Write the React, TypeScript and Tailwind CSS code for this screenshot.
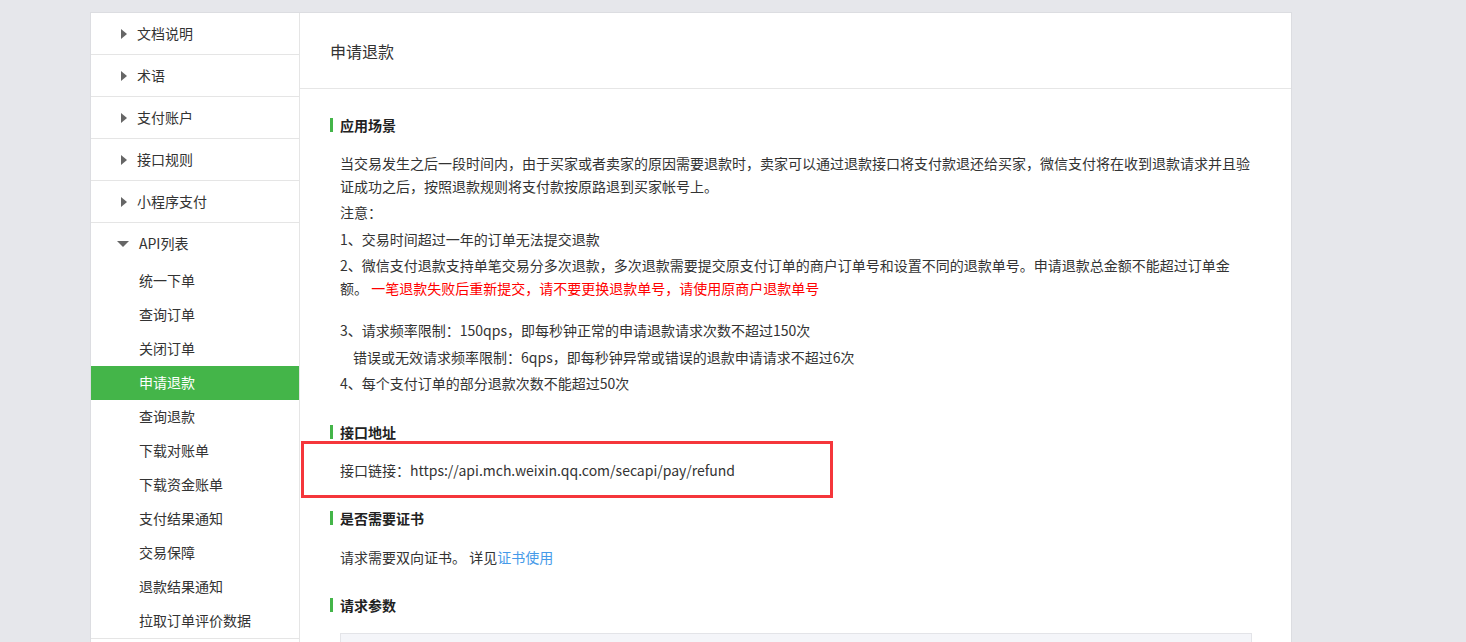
import React from 'react';

const topItems = ['文档说明', '术语', '支付账户', '接口规则', '小程序支付'];

const apiItems = [
  '统一下单',
  '查询订单',
  '关闭订单',
  '申请退款',
  '查询退款',
  '下载对账单',
  '下载资金账单',
  '支付结果通知',
  '交易保障',
  '退款结果通知',
  '拉取订单评价数据',
];

const font = { fontFamily: '"Noto Sans CJK SC", "Noto Sans", sans-serif' };

const RightCaret = () => (
  <span className="inline-block w-0 h-0 border-y-[5px] border-y-transparent border-l-[6px] border-l-[#666]" />
);

const DownCaret = () => (
  <span className="inline-block w-0 h-0 border-x-[6px] border-x-transparent border-t-[6px] border-t-[#666]" />
);

const Sidebar = () => (
  <div className="w-[209px] shrink-0 border-r border-[#e5e5e5] text-[14px] text-[#333]">
    {topItems.map((name) => (
      <div key={name} className="flex h-[42px] items-center gap-x-[10px] border-b border-[#e5e5e5] pl-[30px]">
        <RightCaret />
        <span>{name}</span>
      </div>
    ))}
    <div className="border-b border-[#e5e5e5]">
      <div className="flex h-[41px] items-center gap-x-[10px] pl-[26px]">
        <DownCaret />
        <span>API列表</span>
      </div>
      <ul>
        {apiItems.map((name) => (
          <li
            key={name}
            className={
              name === '申请退款'
                ? 'flex h-[34px] items-center bg-[#44b549] pb-[1px] pl-[48px] text-white'
                : 'flex h-[34px] items-center pb-[1px] pl-[48px]'
            }
          >
            {name}
          </li>
        ))}
      </ul>
    </div>
    <div className="flex h-[42px] items-center gap-x-[10px] border-b border-[#e5e5e5] pl-[30px]">
      <RightCaret />
      <span>常见问题</span>
    </div>
  </div>
);

const SectionTitle = ({ children }: { children: React.ReactNode }) => (
  <h3 className="h-[14px] border-l-[3px] border-[#44b549] pl-[7px] text-[14px] font-bold leading-[14px] text-[#222]">
    {children}
  </h3>
);

export default function App() {
  return (
    <div className="min-h-[642px] bg-[#e6e7eb] pt-[12px]" style={font}>
      <div className="ml-[90px] flex w-[1202px] border border-[#dcdde1] bg-white">
        <Sidebar />
        <div className="flex-1">
          <div className="h-[76px] border-b border-[#e6e6e6] pl-[30px] pt-[26px] text-[16px] leading-[24px] text-[#333]">
            申请退款
          </div>
          <div className="pl-[30px] pr-[39px] pt-[29px] text-[14px] text-[#333]">
            <section>
              <SectionTitle>应用场景</SectionTitle>
              <div className="mt-[20px] pl-[10px] leading-[22.5px]">
                <p className="mb-[4px]">
                  当交易发生之后一段时间内，由于买家或者卖家的原因需要退款时，卖家可以通过退款接口将支付款退还给买家，微信支付将在收到退款请求并且验证成功之后，按照退款规则将支付款按原路退到买家帐号上。
                </p>
                <p className="mb-[4px]">注意：</p>
                <p className="mb-[4px]">1、交易时间超过一年的订单无法提交退款</p>
                <p className="mb-[20px]">
                  2、微信支付退款支持单笔交易分多次退款，多次退款需要提交原支付订单的商户订单号和设置不同的退款单号。申请退款总金额不能超过订单金额。{' '}
                  <span className="text-[#ff0000]">一笔退款失败后重新提交，请不要更换退款单号，请使用原商户退款单号</span>
                </p>
                <p className="mb-[4px]">3、请求频率限制：150qps，即每秒钟正常的申请退款请求次数不超过150次</p>
                <p className="mb-[4px] pl-[13px]">错误或无效请求频率限制：6qps，即每秒钟异常或错误的退款申请请求不超过6次</p>
                <p>4、每个支付订单的部分退款次数不能超过50次</p>
              </div>
            </section>

            <section className="relative mt-[30px]">
              <SectionTitle>接口地址</SectionTitle>
              <p className="mt-[20px] pl-[10px] leading-[22.5px]">
                接口链接：https://api.mch.weixin.qq.com/secapi/pay/refund
              </p>
              <div className="absolute left-[-29px] top-[16px] h-[57px] w-[532px] border-[3px] border-[#f5363b]" />
            </section>

            <section className="mt-[30px]">
              <SectionTitle>是否需要证书</SectionTitle>
              <p className="mt-[21px] pl-[10px] leading-[22.5px]">
                请求需要双向证书。 详见<a className="text-[#459ae9]">证书使用</a>
              </p>
            </section>

            <section className="mt-[29px]">
              <SectionTitle>请求参数</SectionTitle>
              <div className="ml-[10px] mt-[21px]">
                <table className="w-full border border-[#e3e4e8] text-left text-[14px]">
                  <thead className="bg-[#f4f5f9]">
                    <tr>
                      <th className="h-[44px] px-[10px] font-normal">字段名</th>
                      <th className="px-[10px] font-normal">变量名</th>
                      <th className="px-[10px] font-normal">必填</th>
                      <th className="px-[10px] font-normal">类型</th>
                      <th className="px-[10px] font-normal">示例值</th>
                      <th className="px-[10px] font-normal">描述</th>
                    </tr>
                  </thead>
                </table>
              </div>
            </section>
          </div>
        </div>
      </div>
    </div>
  );
}
